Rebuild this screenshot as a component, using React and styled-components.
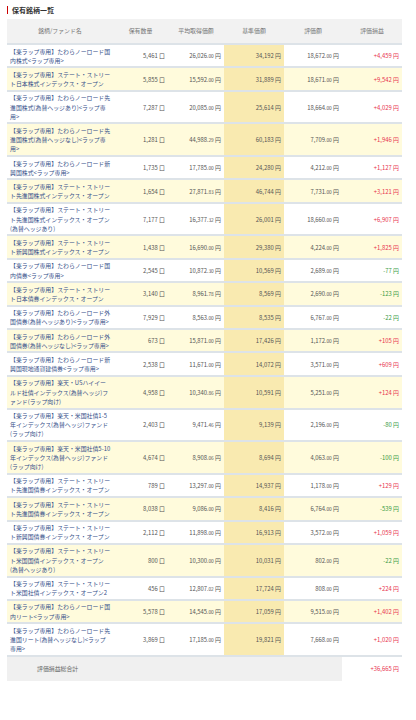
import React from "react";
import styled, { createGlobalStyle } from "styled-components";

const G = createGlobalStyle`
  body{margin:0;background:#fff;font-family:"Noto Sans CJK JP","Noto Sans",sans-serif;}
`;
const Wrap = styled.div`padding:4px 14px 8px 7px;`;
const Title = styled.div`
  font-size:7px;font-weight:bold;color:#333;border-left:1.5px solid #c00;padding-left:4px;line-height:8px;margin:2px 0 5px 0;
`;
const Table = styled.table`
  width:395px;border-collapse:collapse;table-layout:fixed;font-size:5.9px;line-height:9.2px;
`;
const Th = styled.th`
  background:#f2f2f2;color:#777;font-weight:normal;height:24px;text-align:center;padding:0;
  border-bottom:2px solid #dde3e8;
`;
const Tr = styled.tr`
  background:${p => (p.$alt ? "#fffbdc" : "#fff")};
  border-bottom:2px solid #dde3e8;
`;
const Name = styled.td`color:#36508a;padding:1.5px 2px 1.5px 3px;text-align:left;vertical-align:middle;word-break:break-all;`;
const Num = styled.td`
  color:#555;text-align:right;padding:0 3px;white-space:nowrap;
  background:${p => (p.$hl ? "#f9eab0" : "transparent")};
`;
const Small = styled.span`font-size:4.8px;`;
const Pl = styled.td`
  text-align:right;padding:0 3px;white-space:nowrap;color:${p => (p.$neg ? "#3a9a44" : "#e8334e")};
`;
const TotalLabel = styled.td`background:#f0f0f0;color:#666;height:22px;padding-left:30px;`;
const TotalFill = styled.td`background:#f0f0f0;`;

const P = "【楽ラップ専用】";
const rows = [
  ["たわらノーロード国内株式<ラップ専用>", "5,461", "26,026.00", "34,192", "18,672.00", "+4,459"],
  ["ステート・ストリート日本株式インデックス・オープン", "5,855", "15,592.00", "31,889", "18,671.00", "+9,542"],
  ["たわらノーロード先進国株式(為替ヘッジあり)<ラップ専用>", "7,287", "20,085.00", "25,614", "18,664.00", "+4,029"],
  ["たわらノーロード先進国株式(為替ヘッジなし)<ラップ専用>", "1,281", "44,988.29", "60,183", "7,709.00", "+1,946"],
  ["たわらノーロード新興国株式<ラップ専用>", "1,735", "17,785.00", "24,280", "4,212.00", "+1,127"],
  ["ステート・ストリート先進国株式インデックス・オープン", "1,654", "27,871.83", "46,744", "7,731.00", "+3,121"],
  ["ステート・ストリート先進国株式インデックス・オープン(為替ヘッジあり)", "7,177", "16,377.32", "26,001", "18,660.00", "+6,907"],
  ["ステート・ストリート新興国株式インデックス・オープン", "1,438", "16,690.00", "29,380", "4,224.00", "+1,825"],
  ["たわらノーロード国内債券<ラップ専用>", "2,545", "10,872.30", "10,569", "2,689.00", "-77"],
  ["ステート・ストリート日本債券インデックス・オープン", "3,140", "8,961.78", "8,569", "2,690.00", "-123"],
  ["たわらノーロード外国債券(為替ヘッジあり)<ラップ専用>", "7,929", "8,563.00", "8,535", "6,767.00", "-22"],
  ["たわらノーロード外国債券(為替ヘッジなし)<ラップ専用>", "673", "15,871.00", "17,426", "1,172.00", "+105"],
  ["たわらノーロード新興国現地通貨建債券<ラップ専用>", "2,538", "11,671.00", "14,072", "3,571.00", "+609"],
  ["楽天・USハイイールド社債インデックス(為替ヘッジ)ファンド(ラップ向け)", "4,958", "10,340.86", "10,591", "5,251.00", "+124"],
  ["楽天・米国社債1-5年インデックス(為替ヘッジ)ファンド(ラップ向け)", "2,403", "9,471.46", "9,139", "2,196.00", "-80"],
  ["楽天・米国社債5-10年インデックス(為替ヘッジ)ファンド(ラップ向け)", "4,674", "8,908.06", "8,694", "4,063.00", "-100"],
  ["ステート・ストリート先進国債券インデックス・オープン", "789", "13,297.00", "14,937", "1,178.00", "+129"],
  ["ステート・ストリート先進国債券インデックス・オープン", "8,038", "9,086.00", "8,416", "6,764.00", "-539"],
  ["ステート・ストリート新興国債券インデックス・オープン", "2,112", "11,898.00", "16,913", "3,572.00", "+1,059"],
  ["ステート・ストリート米国国債インデックス・オープン(為替ヘッジあり)", "800", "10,300.00", "10,031", "802.00", "-22"],
  ["ステート・ストリート米国社債インデックス・オープン2", "456", "12,807.02", "17,724", "808.00", "+224"],
  ["たわらノーロード国内リート<ラップ専用>", "5,578", "14,545.00", "17,059", "9,515.00", "+1,402"],
  ["たわらノーロード先進国リート(為替ヘッジなし)<ラップ専用>", "3,869", "17,185.00", "19,821", "7,668.00", "+1,020"],
];

const Dec = ({ v }) => {
  const [a, b] = v.split(".");
  return <>{a}<Small>.{b}</Small> 円</>;
};

export default function App() {
  return (
    <Wrap>
      <G />
      <Title>保有銘柄一覧</Title>
      <Table>
        <colgroup>
          <col style={{ width: 106 }} /><col style={{ width: 55 }} /><col style={{ width: 56 }} />
          <col style={{ width: 60 }} /><col style={{ width: 58 }} /><col style={{ width: 60 }} />
        </colgroup>
        <thead>
          <tr><Th>銘柄/ファンド名</Th><Th>保有数量</Th><Th>平均取得価額</Th><Th>基準価額</Th><Th>評価額</Th><Th>評価損益</Th></tr>
        </thead>
        <tbody>
          {rows.map((r, i) => (
            <Tr key={i} $alt={i % 2 === 1}>
              <Name>{P}{r[0]}</Name>
              <Num>{r[1]} 口</Num>
              <Num><Dec v={r[2]} /></Num>
              <Num $hl>{r[3]} 円</Num>
              <Num><Dec v={r[4]} /></Num>
              <Pl $neg={r[5].startsWith("-")}>{r[5]} 円</Pl>
            </Tr>
          ))}
          <tr>
            <TotalLabel>評価損益総合計</TotalLabel>
            <TotalFill colSpan={4} />
            <Pl>+36,665 円</Pl>
          </tr>
        </tbody>
      </Table>
    </Wrap>
  );
}
